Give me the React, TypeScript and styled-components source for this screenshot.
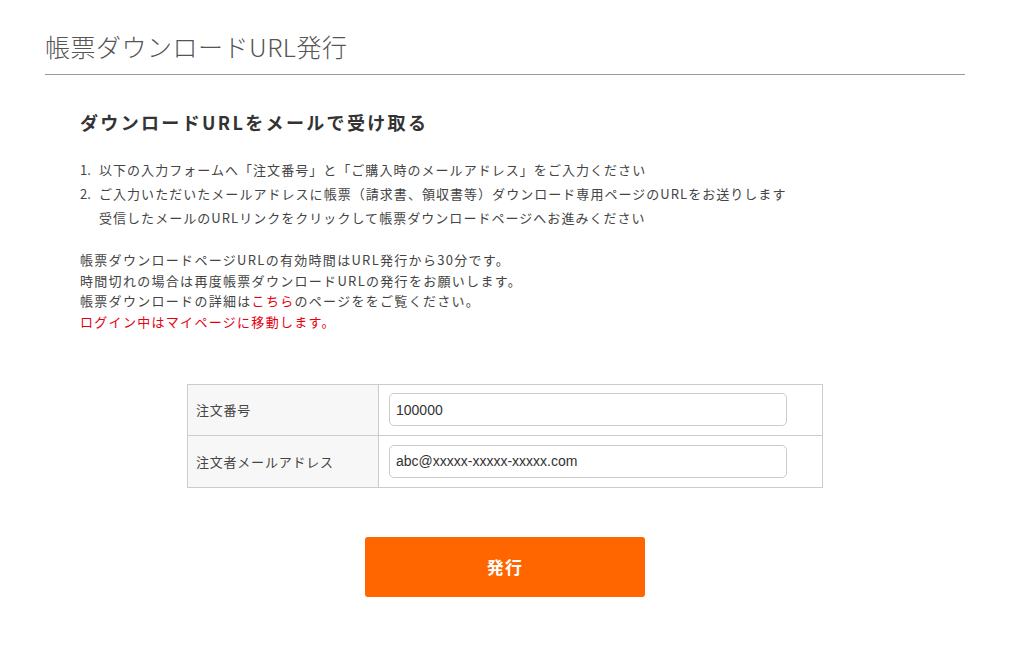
import React from "react";
import styled, { createGlobalStyle } from "styled-components";

const GlobalStyle = createGlobalStyle`
  html, body { margin: 0; padding: 0; background: #fff; }
  body { font-family: "Noto Sans CJK JP", "Noto Sans", sans-serif; color: #333; }
  * { box-sizing: border-box; }
`;

const Page = styled.div`
  width: 1009px;
  padding: 28px 44px 40px 45px;
`;

const PageTitle = styled.h1`
  margin: 0;
  font-size: 25px;
  font-weight: 300;
  color: #555;
  line-height: 36px;
  padding-bottom: 10px;
  border-bottom: 1px solid #999;
  letter-spacing: 0.02em;
`;

const Section = styled.section`
  padding: 0 35px;
`;

const SectionTitle = styled.h2`
  margin: 33px 0 0;
  font-size: 18px;
  font-weight: 700;
  color: #333;
  line-height: 28px;
  letter-spacing: 0.13em;
`;

const Steps = styled.ol`
  margin: 22px 0 0;
  padding: 0;
  list-style: none;
  font-size: 13px;
  line-height: 24px;
  letter-spacing: 0.08em;
  color: #444;
`;

const Step = styled.li`
  display: flex;
`;

const StepNum = styled.span`
  width: 19px;
  flex: none;
  letter-spacing: 0;
`;

const Notes = styled.div`
  margin-top: 20px;
  font-size: 13px;
  line-height: 20.7px;
  letter-spacing: 0.1em;
  color: #444;
`;

const NoteLine = styled.p<{ $red?: boolean }>`
  margin: 0;
  color: ${(p) => (p.$red ? "#e60012" : "inherit")};
`;

const RedText = styled.span`
  color: #e60012;
`;

const FormTable = styled.div`
  margin: 51px auto 0;
  width: 636px;
  border: 1px solid #ccc;
  display: grid;
  grid-template-columns: 191px 1fr;
`;

const Label = styled.div<{ $last?: boolean }>`
  background: #f7f7f7;
  border-right: 1px solid #ccc;
  border-bottom: ${(p) => (p.$last ? "none" : "1px solid #ccc")};
  display: flex;
  align-items: center;
  padding: 0 8px;
  height: 51px;
  font-size: 13px;
  letter-spacing: 0.06em;
  color: #444;
`;

const Field = styled.div<{ $last?: boolean }>`
  border-bottom: ${(p) => (p.$last ? "none" : "1px solid #ccc")};
  display: flex;
  align-items: center;
  padding: 0 35px 0 10px;
  height: 51px;
`;

const Input = styled.input`
  width: 100%;
  height: 33px;
  border: 1px solid #ccc;
  border-radius: 5px;
  padding: 0 6px;
  font-family: "Liberation Sans", Arial, sans-serif;
  font-size: 14px;
  color: #333;
  outline: none;
`;

const ButtonRow = styled.div`
  display: flex;
  justify-content: center;
  margin-top: 49px;
`;

const SubmitButton = styled.button`
  width: 280px;
  height: 60px;
  background: #ff6600;
  border: none;
  border-radius: 3px;
  color: #fff;
  font-family: "Noto Sans CJK JP", sans-serif;
  font-size: 17px;
  font-weight: 700;
  letter-spacing: 0.08em;
  cursor: pointer;
`;

export default function App() {
  return (
    <>
      <GlobalStyle />
      <Page>
        <PageTitle>帳票ダウンロードURL発行</PageTitle>
        <Section>
          <SectionTitle>ダウンロードURLをメールで受け取る</SectionTitle>
          <Steps>
            <Step>
              <StepNum>1.</StepNum>
              <span>以下の入力フォームへ「注文番号」と「ご購入時のメールアドレス」をご入力ください</span>
            </Step>
            <Step>
              <StepNum>2.</StepNum>
              <span>
                ご入力いただいたメールアドレスに帳票（請求書、領収書等）ダウンロード専用ページのURLをお送りします
                <br />
                受信したメールのURLリンクをクリックして帳票ダウンロードページへお進みください
              </span>
            </Step>
          </Steps>
          <Notes>
            <NoteLine>帳票ダウンロードページURLの有効時間はURL発行から30分です。</NoteLine>
            <NoteLine>時間切れの場合は再度帳票ダウンロードURLの発行をお願いします。</NoteLine>
            <NoteLine>
              帳票ダウンロードの詳細は<RedText>こちら</RedText>のページををご覧ください。
            </NoteLine>
            <NoteLine $red>ログイン中はマイページに移動します。</NoteLine>
          </Notes>
        </Section>
        <FormTable>
          <Label>注文番号</Label>
          <Field>
            <Input defaultValue="100000" />
          </Field>
          <Label $last>注文者メールアドレス</Label>
          <Field $last>
            <Input defaultValue="abc@xxxxx-xxxxx-xxxxx.com" />
          </Field>
        </FormTable>
        <ButtonRow>
          <SubmitButton>発行</SubmitButton>
        </ButtonRow>
      </Page>
    </>
  );
}
